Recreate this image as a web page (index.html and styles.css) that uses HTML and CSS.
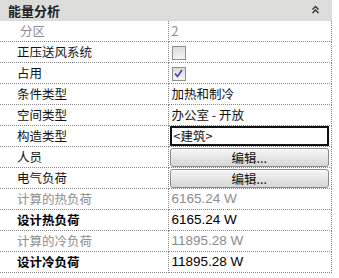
FILE: index.html
```html
<!DOCTYPE html>
<html lang="zh-CN">
<head>
    <meta charset="UTF-8">
    <title>能量分析</title>
    <link rel="stylesheet" href="styles.css">
</head>
<body>
    <div class="panel">
        <div class="group-header">
            <span class="group-title">能量分析</span>
            <svg class="collapse" width="9" height="9" viewBox="0 0 9 9">
                <path d="M1.5 4.5 L4.5 1.5 L7.5 4.5 M1.5 8 L4.5 5 L7.5 8" fill="none" stroke="#333" stroke-width="1.4"/>
            </svg>
        </div>
        <table class="props">
            <colgroup>
                <col class="col-label">
                <col class="col-value">
            </colgroup>
            <tr class="disabled">
                <td class="label indent">分区</td>
                <td class="value">2</td>
            </tr>
            <tr>
                <td class="label">正压送风系统</td>
                <td class="value"><span class="check"></span></td>
            </tr>
            <tr>
                <td class="label">占用</td>
                <td class="value">
                    <span class="check">
                        <svg width="11" height="11" viewBox="0 0 11 11">
                            <path d="M2 5.5 L4.5 8.5 L9 2" fill="none" stroke="#4b3fb5" stroke-width="1.6"/>
                        </svg>
                    </span>
                </td>
            </tr>
            <tr>
                <td class="label">条件类型</td>
                <td class="value">加热和制冷</td>
            </tr>
            <tr>
                <td class="label">空间类型</td>
                <td class="value">办公室 - 开放</td>
            </tr>
            <tr>
                <td class="label">构造类型</td>
                <td class="value boxed"><div class="edit-box">&lt;建筑&gt;</div></td>
            </tr>
            <tr>
                <td class="label">人员</td>
                <td class="value boxed"><button class="edit-btn">编辑...</button></td>
            </tr>
            <tr>
                <td class="label">电气负荷</td>
                <td class="value boxed"><button class="edit-btn">编辑...</button></td>
            </tr>
            <tr class="disabled">
                <td class="label">计算的热负荷</td>
                <td class="value num">6165.24 W</td>
            </tr>
            <tr class="strong">
                <td class="label">设计热负荷</td>
                <td class="value num">6165.24 W</td>
            </tr>
            <tr class="disabled">
                <td class="label">计算的冷负荷</td>
                <td class="value num">11895.28 W</td>
            </tr>
            <tr class="strong">
                <td class="label">设计冷负荷</td>
                <td class="value num">11895.28 W</td>
            </tr>
        </table>
    </div>
</body>
</html>
```

FILE: styles.css
```css
body {
    margin: 0;
    background-color: #fff;
    font-family: "Noto Sans CJK SC", "DejaVu Sans", sans-serif;
    font-size: 12.5px;
    color: #111;
}
.panel {
    width: 332px;
}
.group-header {
    height: 21px;
    background-color: #dcdcdb;
    display: flex;
    align-items: center;
    justify-content: space-between;
    padding: 0 12px 0 8px;
}
.group-title {
    font-weight: bold;
    color: #222;
    font-size: 13px;
}
.collapse {
    margin-top: -2px;
}
table.props {
    width: 332px;
    border-collapse: collapse;
    table-layout: fixed;
}
col.col-label {
    width: 168px;
}
table.props td {
    height: 20px;
    padding: 0;
    border-bottom: 1px dotted #888;
    border-right: 1px dotted #888;
    white-space: nowrap;
    vertical-align: middle;
    line-height: 20px;
}
table.props td.label {
    padding-left: 17px;
}
table.props td.label.indent {
    padding-left: 20px;
}
table.props td.value {
    padding-left: 3px;
}
table.props td.value.boxed {
    padding: 0 2px 0 1px;
}
td.num {
    font-family: "Liberation Sans", Arial, sans-serif;
    font-size: 13.5px;
}
tr.disabled td {
    color: #8d8d8d;
}
tr.strong td {
    color: #000;
}
tr.strong td.label {
    font-weight: bold;
}
.check {
    display: inline-block;
    width: 12px;
    height: 12px;
    border: 1px solid #8f8f8f;
    background: linear-gradient(#dcdcdc, #f4f4f4);
    vertical-align: middle;
    margin-top: -2px;
    position: relative;
}
.check svg {
    position: absolute;
    left: 0;
    top: 0;
}
.edit-box {
    height: 16px;
    line-height: 16px;
    border: 2px solid #111;
    padding-left: 2px;
    background: #fff;
}
.edit-btn {
    display: block;
    width: 100%;
    height: 19px;
    margin: 0;
    padding: 0;
    font-family: "Noto Sans CJK SC", sans-serif;
    font-size: 12.5px;
    line-height: 17px;
    color: #111;
    border: 1px solid #8a8a8a;
    border-radius: 3px;
    background: linear-gradient(#f6f6f6, #e6e6e6 50%, #d6d6d6);
    box-shadow: inset 0 1px 0 #fff;
}
```
